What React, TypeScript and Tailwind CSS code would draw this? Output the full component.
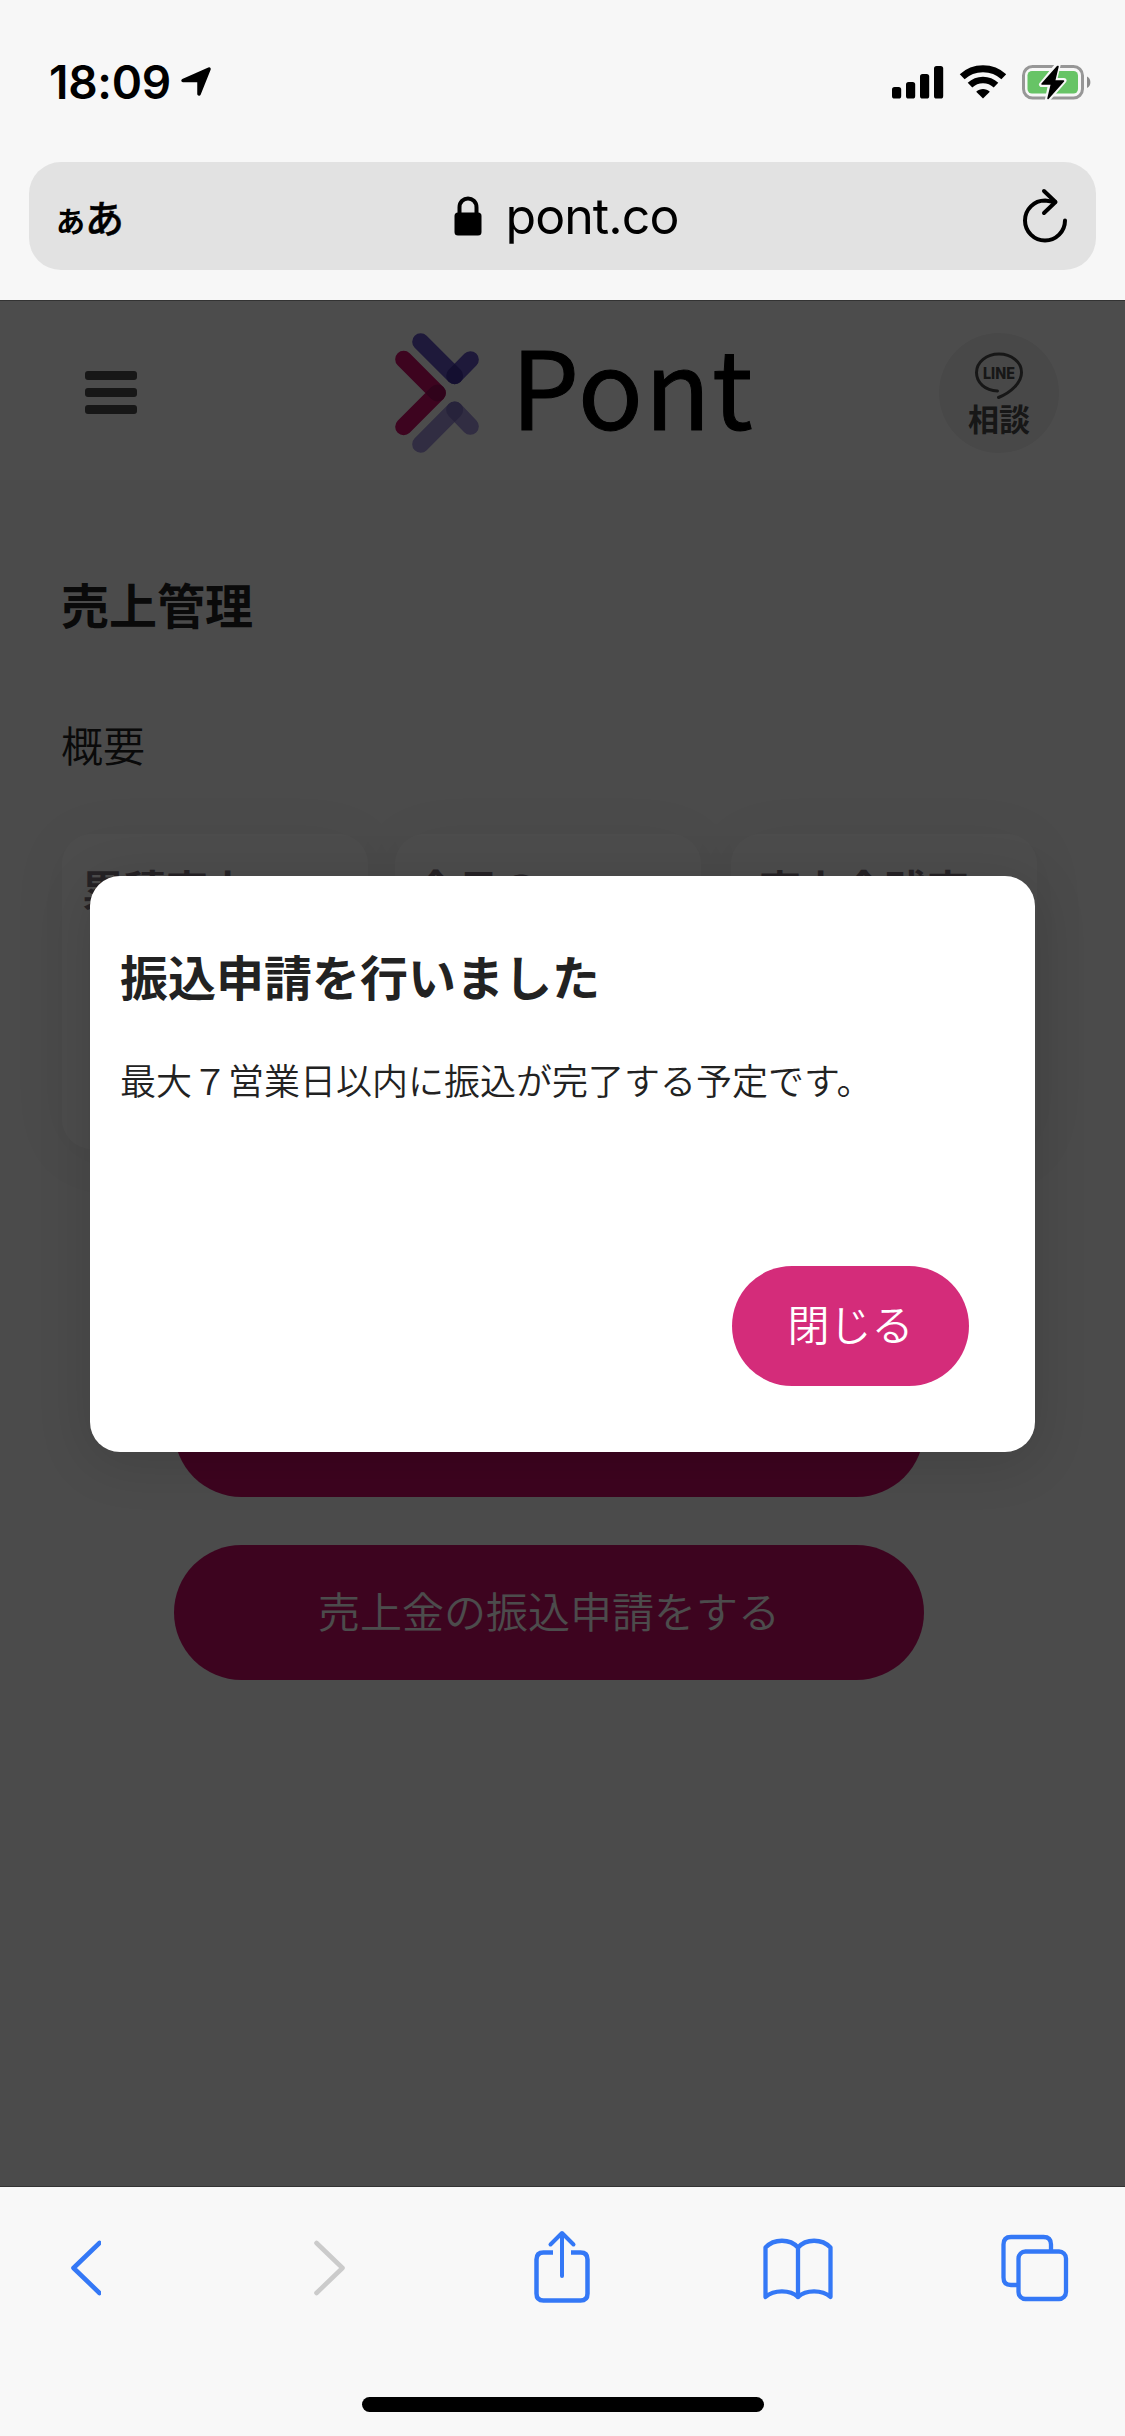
import type { ReactNode } from "react";

interface SummaryCardProps {
  title: string;
  className?: string;
  titleClassName?: string;
}

const SUMMARY_CARDS: SummaryCardProps[] = [
  { title: "累積売上", titleClassName: "pl-[20px]" },
  { title: "今月の", className: "ml-[27px]", titleClassName: "pl-[20px]" },
  { title: "売上金残高", className: "ml-[30px]", titleClassName: "pl-[28px]" },
];

function StatusBar() {
  return (
    <div className="flex h-[162px] items-start justify-between pt-[58px] pr-[33px] pl-[49px]">
      <div className="flex items-start">
        <span className="w-[132px] font-['Inter'] text-[46px] leading-[48px] font-semibold tracking-[-0.3px] whitespace-nowrap text-black">
          18:09
        </span>
        <svg className="mt-[8px] h-[32px] w-[32px]" viewBox="0 0 32 32">
          <path
            d="M2 14.500 28 3 18 28 V14.500 Z"
            fill="black"
            stroke="black"
            strokeWidth="3.500"
            strokeLinejoin="round"
          />
        </svg>
      </div>
      <div className="flex items-start pt-[6px]">
        <svg className="mr-[15px] h-[36px] w-[52px]" viewBox="0 0 52 36">
          <rect x="0" y="23" width="9.200" height="11.500" rx="2.600" />
          <rect x="14" y="18" width="9.200" height="16.500" rx="2.600" />
          <rect x="28" y="10" width="9.200" height="24.500" rx="2.600" />
          <rect x="42" y="2" width="9.200" height="32.500" rx="2.600" />
        </svg>
        <svg className="mr-[13px] h-[36px] w-[48px]" viewBox="0 0 48 36" fill="none" stroke="black" strokeWidth="7">
          <path d="M3.200 12.800C14.500 2 33.500 2 44.800 12.800" />
          <path d="M11 21.200C18.300 14.200 29.700 14.200 37 21.200" strokeWidth="6.600" />
          <path d="M17.200 27.700C21 24 27 24 30.800 27.700L24 34.500Z" fill="black" stroke="none" />
        </svg>
        <svg className="h-[38px] w-[72px]" viewBox="0 0 72 38">
          <rect x="3.500" y="2.500" width="59" height="31.500" rx="9" fill="none" stroke="#979797" strokeWidth="3" />
          <path d="M67 12.500C71.500 14.500 71.500 22 67 24Z" fill="#8c8c8c" />
          <rect x="7.500" y="7" width="50.500" height="22.500" rx="4.500" fill="#67c466" />
          <path
            d="M37 1.500 21.500 20.500H30.500L27.500 35.500 44 16.500H34.500L38 1.500Z"
            fill="black"
            stroke="#f7f7f7"
            strokeWidth="5"
            strokeLinejoin="round"
          />
          <path
            d="M37.500 2.500 22 20H31.500L28 34.500 43.500 17H34.500L38 2.500Z"
            fill="black"
            stroke="black"
            strokeWidth="1.500"
            strokeLinejoin="round"
          />
        </svg>
      </div>
    </div>
  );
}

function AddressBar() {
  return (
    <div className="mx-[29px] mb-[30px] flex h-[108px] items-center justify-between rounded-[32px] bg-[#e2e2e2] pr-[27px] pl-[27px]">
      <div className="flex w-[90px] items-baseline text-black">
        <span className="text-[29px] leading-none font-bold">あ</span>
        <span className="text-[39px] leading-none font-medium [-webkit-text-stroke:0.5px_black]">あ</span>
      </div>
      <div className="ml-[8px] flex items-center">
        <svg className="mr-[23px] h-[40px] w-[28px]" viewBox="0 0 28 40">
          <rect x="0.500" y="16.500" width="27" height="23" rx="3.500" />
          <path d="M5.500 18V11.500C5.500 -0.500 22.500 -0.500 22.500 11.500V18" fill="none" stroke="black" strokeWidth="4" />
        </svg>
        <span className="font-['Inter'] text-[50px] leading-none tracking-[-0.9px] text-black">pont.co</span>
      </div>
      <div className="flex w-[90px] justify-end">
        <svg
          className="h-[56px] w-[48px]"
          viewBox="0 0 48 56"
          fill="none"
          stroke="black"
          strokeWidth="4"
          strokeLinecap="round"
          strokeLinejoin="round"
        >
          <path d="M44 32.500A20 20 0 1 1 24 12.500L34 14" />
          <path d="M23 3 34.500 14 23 25" />
        </svg>
      </div>
    </div>
  );
}

function PontLogo() {
  return (
    <div className="flex items-start">
      <svg
        className="h-[120px] w-[84px]"
        viewBox="75 99 252 360"
        fill="none"
        strokeWidth="51"
        strokeLinecap="round"
      >
        <path d="M101 178 202 279 101 380" stroke="#cb0f6a" strokeLinejoin="round" />
        <path d="M152 125 254 227 301 179" stroke="#6454c2" strokeLinejoin="round" />
        <path d="M152 433 254 330 301 379" stroke="#a396dc" strokeLinejoin="round" />
        {/* darker folds where two strokes meet */}
        <g stroke="none">
          <path d="M166 279 184 261A25.500 25.500 0 1 1 184 297Z" fill="#a00a5a" />
          <path d="M254 191 236 209A25.500 25.500 0 1 0 272 209Z" fill="#4335a0" />
          <path d="M254 366 236 348A25.500 25.500 0 1 1 272 348Z" fill="#8275c5" />
        </g>
      </svg>
      <span className="-mt-[10px] ml-[32px] w-[241px] text-[108px] leading-[120px] tracking-[1.4px] whitespace-nowrap text-black [-webkit-text-stroke:1px_black]">
        Pont
      </span>
    </div>
  );
}

function LineButton() {
  return (
    <div className="flex h-[120px] w-[120px] flex-col items-center rounded-full bg-[#f0f0f0] pt-[18px] text-[#4d4d4d]">
      <svg className="h-[49px] w-[50px]" viewBox="0 0 50 49" fill="none" stroke="currentColor">
        <path
          d="M23.500 40C11 39.500 2.500 31.500 2.500 21.500 2.500 11 12.500 3 25 3S47.500 11 47.500 21.500C47.500 31.500 37.500 41 24.500 46.500"
          strokeWidth="3"
          strokeLinecap="round"
        />
        <text
          x="25"
          y="27.500"
          textAnchor="middle"
          textLength="32"
          lengthAdjust="spacingAndGlyphs"
          fill="currentColor"
          stroke="none"
          className="font-['Inter'] text-[16.5px] font-extrabold"
        >
          LINE
        </text>
      </svg>
      <span className="mt-[2px] text-[31px] leading-none font-bold">相談</span>
    </div>
  );
}

function SiteHeader() {
  return (
    <header className="flex h-[179px] items-start justify-between bg-white pt-[32px] pr-[66px] pl-[85px]">
      <div className="mt-[38px] flex w-[52px] flex-col gap-[8px]">
        <span className="h-[9px] rounded-[3px] bg-[#4d4d4d]" />
        <span className="h-[9px] rounded-[3px] bg-[#4d4d4d]" />
        <span className="h-[9px] rounded-[3px] bg-[#4d4d4d]" />
      </div>
      <div className="ml-[71px]">
        <PontLogo />
      </div>
      <LineButton />
    </header>
  );
}

function SummaryCard({ title, className, titleClassName }: SummaryCardProps) {
  return (
    <article
      className={`h-[315px] w-[306px] rounded-[30px] bg-white pt-[33px] shadow-[0_6px_60px_rgba(0,0,0,0.05)] ${className ?? ""}`}
    >
      <h3 className={`text-[42px] leading-none font-bold whitespace-nowrap text-[#7d727d] ${titleClassName ?? ""}`}>
        {title}
      </h3>
    </article>
  );
}

function PrimaryButton({ children }: { children?: ReactNode }) {
  return (
    <button className="flex h-[135px] w-[750px] items-center justify-center rounded-full bg-[#cb0f6a] pb-[5px] text-[42px] leading-none font-[350] text-white">
      {children}
    </button>
  );
}

function SalesPage() {
  return (
    <main className="flex flex-col pt-[99px] text-[#222]">
      <h1 className="pl-[61px] text-[48px] leading-none font-bold">売上管理</h1>
      <h2 className="mt-[96px] pl-[61px] text-[42px] leading-none font-[350]">概要</h2>
      <section className="mt-[69px] flex pl-[62px]">
        {SUMMARY_CARDS.map((card) => (
          <SummaryCard key={card.title} {...card} />
        ))}
      </section>
      <div className="mt-[213px] ml-[174px] flex flex-col gap-[48px]">
        <PrimaryButton />
        <PrimaryButton>売上金の振込申請をする</PrimaryButton>
      </div>
    </main>
  );
}

function TransferDialog() {
  return (
    <div className="absolute inset-0 flex items-start justify-center bg-black/70 pt-[575px]">
      <div className="flex h-[576px] w-[945px] flex-col rounded-[30px] bg-white px-[30px] pt-[75px] text-[#222] shadow-[0_9px_54px_rgba(0,0,0,0.14)]">
        <h2 className="text-[48px] leading-none font-bold whitespace-nowrap">振込申請を行いました</h2>
        <p className="mt-[62px] text-[36px] leading-none font-[350] whitespace-nowrap">
          最大７営業日以内に振込が完了する予定です。
        </p>
        <button className="mt-[169px] mr-[36px] flex h-[120px] w-[237px] items-center justify-center self-end rounded-full bg-[#d42c7a] pb-[7px] text-[42px] leading-none font-[350] text-white">
          閉じる
        </button>
      </div>
    </div>
  );
}

function BrowserToolbar() {
  return (
    <footer className="flex h-[249px] flex-col items-center bg-[#f8f8f8]">
      <div className="flex w-full items-center pt-[42px] pl-[69px] text-[#3478f6]">
        <svg
          className="mr-[213px] h-[78px] w-[32px]"
          viewBox="0 0 32 78"
          fill="none"
          stroke="currentColor"
          strokeWidth="4.600"
          strokeLinecap="round"
          strokeLinejoin="round"
        >
          <path d="M30.500 14 4.500 39 30.500 64" />
        </svg>
        <svg
          className="mr-[187px] h-[78px] w-[32px] text-[#cbcbcb]"
          viewBox="0 0 32 78"
          fill="none"
          stroke="currentColor"
          strokeWidth="4.600"
          strokeLinecap="round"
          strokeLinejoin="round"
        >
          <path d="M2.500 14 28.500 39 2.500 64" />
        </svg>
        <svg className="mr-[171px] h-[78px] w-[58px]" viewBox="0 0 58 78" fill="none" stroke="currentColor" strokeWidth="4.500">
          <path d="M20 23.500H10.500Q3.500 23.500 3.500 30.500V64.500Q3.500 71.500 10.500 71.500H47.500Q54.500 71.500 54.500 64.500V30.500Q54.500 23.500 47.500 23.500H38" />
          <path d="M29 47V4.500M17.500 15.500 29 4 40.500 15.500" strokeWidth="4" strokeLinecap="round" strokeLinejoin="round" />
        </svg>
        <svg
          className="mr-[166px] h-[78px] w-[72px]"
          viewBox="0 0 72 78"
          fill="none"
          stroke="currentColor"
          strokeWidth="4.300"
          strokeLinecap="round"
          strokeLinejoin="round"
        >
          <path d="M3.500 68V18.500C12 9.500 28 9.500 36 18.500 44 9.500 60 9.500 68.500 18.500V68C60 60.500 44 60.500 36 68 28 60.500 12 60.500 3.500 68Z" />
          <path d="M36 18.500V68" />
        </svg>
        <svg className="h-[78px] w-[70px]" viewBox="0 0 70 78" fill="none" stroke="currentColor" strokeWidth="4.300">
          <path d="M17.500 56H11Q3.500 56 3.500 48.500V15.500Q3.500 8 11 8H43.500Q51 8 51 15.500V23" />
          <rect x="18.500" y="22.500" width="47.500" height="47.500" rx="7" />
        </svg>
      </div>
      <div className="mt-[90px] h-[15px] w-[402px] rounded-full bg-black" />
    </footer>
  );
}

export default function App() {
  return (
    <div className="flex h-[2436px] w-[1125px] flex-col overflow-hidden bg-[#f7f7f7] font-['Noto_Sans_CJK_JP',sans-serif]">
      <StatusBar />
      <AddressBar />
      <div className="relative h-[1887px] border-y border-[#333] bg-[#fafafa]">
        <SiteHeader />
        <SalesPage />
        <TransferDialog />
      </div>
      <BrowserToolbar />
    </div>
  );
}
